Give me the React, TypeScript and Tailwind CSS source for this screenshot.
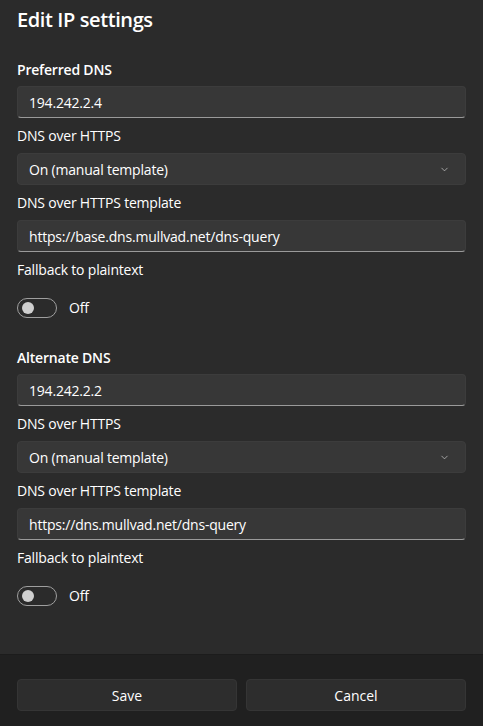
import { ChevronDown } from "lucide-react";

const sections = [
  {
    title: "Preferred DNS",
    ip: "194.242.2.4",
    template: "https://base.dns.mullvad.net/dns-query",
  },
  {
    title: "Alternate DNS",
    ip: "194.242.2.2",
    template: "https://dns.mullvad.net/dns-query",
  },
];

const TextBox = ({ value }: { value: string }) => (
  <div className="h-[32px] rounded-[4px] bg-[#373737] border border-[#3c3c3c] border-b-[#9a9a9a] flex items-center px-[11px] text-[14px] text-[#ffffff]">
    {value}
  </div>
);

const Toggle = () => (
  <div className="flex items-center gap-[12px] mt-[17px]">
    <div className="w-[40px] h-[20px] rounded-full border border-[#9f9f9f] flex items-center pl-[4px]">
      <span className="w-[12px] h-[12px] rounded-full bg-[#cfcfcf]"></span>
    </div>
    <span className="text-[14px] text-white">Off</span>
  </div>
);

export default function App() {
  return (
    <div
      className="w-[483px] h-[726px] flex flex-col bg-[#2b2b2b] text-white tracking-[-0.2px]"
      style={{ fontFamily: '"Segoe UI", "Open Sans", sans-serif' }}
    >
      <div className="flex-1 px-[17px] pt-[6px]">
        <h1 className="text-[20px] leading-[28px] font-semibold tracking-[-0.4px]">Edit IP settings</h1>

        {sections.map((s, idx) => (
          <div key={idx} className={idx === 0 ? "mt-[26px]" : "mt-[30px]"}>
            <p className="text-[14px] leading-[20px] font-semibold">{s.title}</p>
            <div className="mt-[6px]">
              <TextBox value={s.ip} />
            </div>

            <p className="text-[14px] leading-[20px] mt-[8px]">DNS over HTTPS</p>
            <div className="mt-[7px] h-[32px] rounded-[4px] bg-[#373737] border border-[#3c3c3c] flex items-center justify-between pl-[11px] pr-[15px] text-[14px]">
              <span>On (manual template)</span>
              <ChevronDown className="w-[11px] h-[11px] text-[#d0d0d0]" strokeWidth={1.5} />
            </div>

            <p className="text-[14px] leading-[20px] mt-[8px]">DNS over HTTPS template</p>
            <div className="mt-[7px]">
              <TextBox value={s.template} />
            </div>

            <p className="text-[14px] leading-[20px] mt-[8px]">Fallback to plaintext</p>
            <Toggle />
          </div>
        ))}
      </div>

      {/* Footer */}
      <div className="h-[72px] bg-[#202020] border-t border-[#1c1c1c] px-[17px] pt-[24px] grid grid-cols-2 gap-[9px] tracking-normal">
        <button className="h-[32px] rounded-[4px] bg-[#2d2d2d] border border-[#353535] text-[14px] text-white">
          Save
        </button>
        <button className="h-[32px] rounded-[4px] bg-[#2d2d2d] border border-[#353535] text-[14px] text-white">
          Cancel
        </button>
      </div>
    </div>
  );
}
